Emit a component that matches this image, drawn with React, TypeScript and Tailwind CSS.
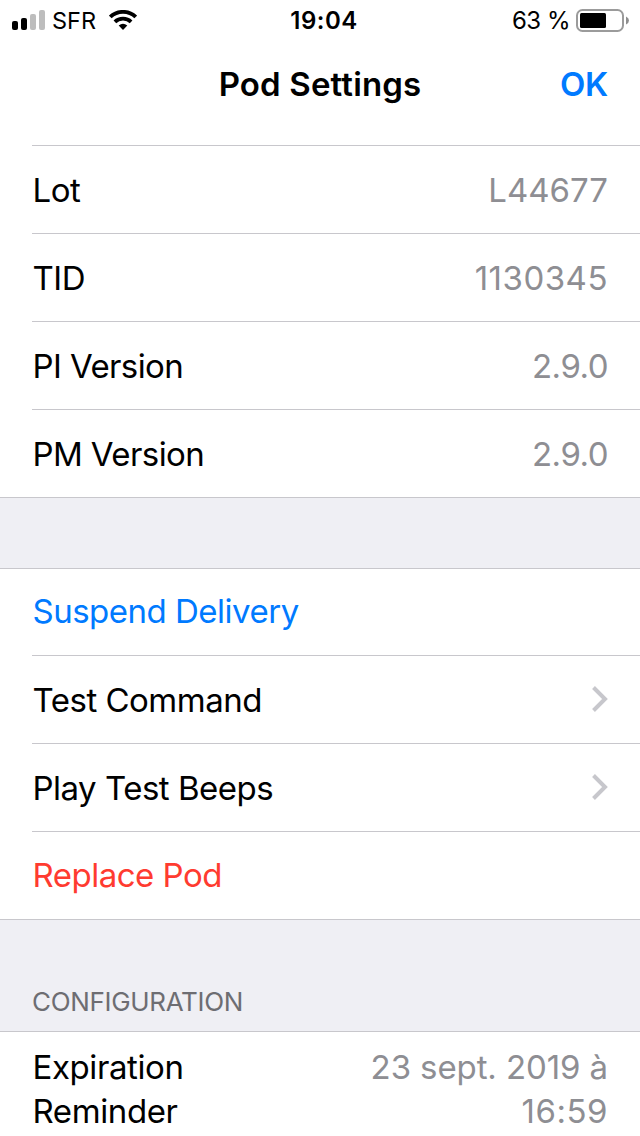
import React from 'react';

type RowProps = {
  label: string;
  value?: string;
  tone?: string;
  chevron?: boolean;
  last?: boolean;
  spacing?: string;
  valueSpacing?: string;
  height?: string;
  inset?: string;
};

function Row({
  label,
  value,
  tone = 'text-black',
  chevron,
  last,
  spacing = 'tracking-[-0.5px]',
  valueSpacing = '',
  height = 'h-[88px]',
  inset = 'pt-px',
}: RowProps) {
  return (
    <div className={`flex ${height} ${last ? '' : 'pl-8'}`}>
      <div className={`flex flex-1 items-center justify-between border-b border-[#c8c7cc] pr-8 ${inset} ${last ? 'pl-8' : ''}`}>
        <span className={`ml-[0.5px] whitespace-nowrap ${tone} ${spacing}`}>{label}</span>
        {value && <span className={`whitespace-nowrap text-[#8e8e93] ${valueSpacing}`}>{value}</span>}
        {chevron && (
          <svg className="-mt-[3px]" width="16" height="26" viewBox="0 0 16 26" fill="none" stroke="#c7c7cc" strokeWidth="4">
            <path d="M1.5 1.5 13 13 1.5 24.5" />
          </svg>
        )}
      </div>
    </div>
  );
}

export default function App() {
  return (
    <main className="flex h-[1136px] w-[640px] flex-col overflow-hidden bg-white font-['Inter',sans-serif] text-[33px] leading-[44px] text-black">
      <header className="h-[145px] shrink-0">
        <div className="grid h-10 grid-cols-[1fr_auto_1fr] items-center pl-3 pr-[11px] text-[24px] leading-[39px]">
          <div className="flex items-center">
            <svg width="34" height="20" viewBox="0 0 34 20">
              <rect x="0" y="11" width="6" height="9" rx="2" />
              <rect x="9" y="8" width="6" height="12" rx="2" />
              <rect x="18" y="4" width="6" height="16" rx="2" fill="#bdbdbd" />
              <rect x="27" y="0" width="6" height="20" rx="2" fill="#bdbdbd" />
            </svg>
            <span className="ml-1.5 pt-px text-[23.5px]">SFR</span>
            <svg className="ml-[13px]" width="28" height="20" viewBox="0 0 28 20" fill="none" stroke="black" strokeWidth="3.8">
              <path d="M1.3 7C8.3.1 19.7.1 26.7 7M5.9 11.9C10.3 7.6 17.7 7.6 22.1 11.9" />
              <path d="M9.7 15.6Q14 12 18.3 15.6L14 20Z" fill="black" stroke="none" />
            </svg>
          </div>
          <span className="ml-[7px] pt-px font-semibold tracking-[0.5px]">19:04</span>
          <div className="flex items-center justify-end">
            <span className="pt-px tracking-[-0.5px]">63 %</span>
            <svg className="ml-1.5" width="53" height="24" viewBox="0 0 53 24">
              <rect x="1" y="2" width="46" height="21" rx="5.5" fill="none" stroke="#9b9b9b" strokeWidth="2" />
              <rect x="4" y="5" width="26" height="15" rx="1.5" />
              <path d="M50 8.5Q53 10 53 12.5 53 15 50 16.5Z" fill="#8e8e8e" />
            </svg>
          </div>
        </div>
        <div className="grid h-[88px] grid-cols-[1fr_auto_1fr] items-center px-8 font-semibold">
          <h1 className="col-start-2 tracking-[0.15px]">Pod Settings</h1>
          <button className="justify-self-end tracking-[-0.3px] text-[#007aff]">OK</button>
        </div>
      </header>
      <div className="ml-8 h-px shrink-0 bg-[#c8c7cc]" />
      <section className="shrink-0">
        <Row label="Lot" value="L44677" />
        <Row label="TID" value="1130345" valueSpacing="tracking-[0.5px]" />
        <Row label="PI Version" value="2.9.0" spacing="tracking-[-0.6px]" valueSpacing="tracking-[-0.5px]" />
        <Row label="PM Version" value="2.9.0" spacing="tracking-[-0.6px]" valueSpacing="tracking-[-0.5px]" last />
      </section>
      <div className="h-[70px] shrink-0 bg-[#efeff4]" />
      <section className="shrink-0 border-t border-[#c8c7cc]">
        <Row label="Suspend Delivery" tone="text-[#007aff]" height="h-[87px]" inset="pb-[3px]" />
        <Row label="Test Command" chevron />
        <Row label="Play Test Beeps" chevron />
        <Row label="Replace Pod" tone="text-[#ff3b30]" inset="pb-px" last />
      </section>
      <div className="flex h-[111px] shrink-0 items-end bg-[#efeff4] px-8 pb-[11px] text-[26px] leading-9 tracking-[-0.33px] text-[#6d6d72]">CONFIGURATION</div>
      <section className="flex shrink-0 justify-between border-t border-[#c8c7cc] px-8 pt-[13px]">
        <span className="ml-[0.5px] tracking-[-0.4px]">Expiration<br />Reminder</span>
        <span className="text-right tracking-[-0.1px] text-[#8e8e93]">23 sept. 2019 à<br /><span className="tracking-[0.5px]">16:59</span></span>
      </section>
    </main>
  );
}
